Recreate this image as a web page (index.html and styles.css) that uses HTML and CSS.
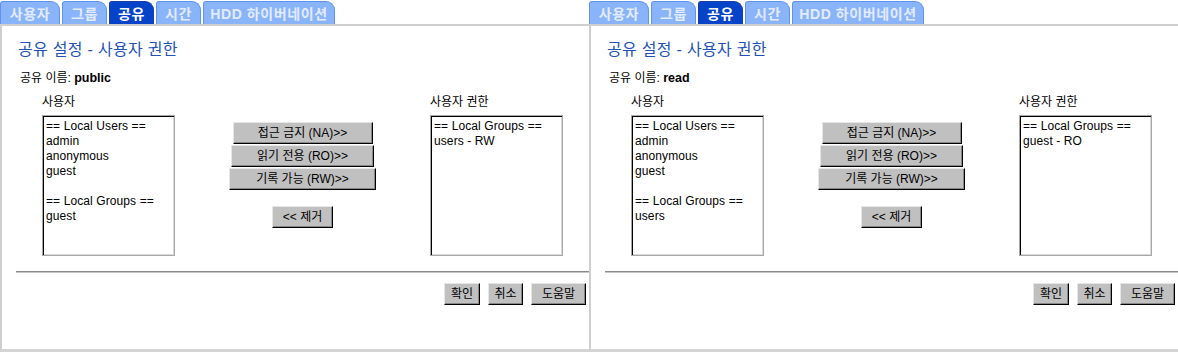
FILE: index.html
```html
<!DOCTYPE html>
<html lang="ko">
<head>
<meta charset="utf-8">
<link rel="stylesheet" href="styles.css">
</head>
<body>
<div class="page">
  <section class="panel">
    <nav class="tabs">
      <span class="tab t1">사용자</span>
      <span class="tab t2">그룹</span>
      <span class="tab t3 active">공유</span>
      <span class="tab t4">시간</span>
      <span class="tab t5">HDD 하이버네이션</span>
    </nav>
    <div class="body">
      <h1 class="title">공유 설정 - 사용자 권한</h1>
      <p class="share">공유 이름: <b>public</b></p>
      <div class="perm">
        <div class="col">
          <div class="label">사용자</div>
          <div class="list">
            <div>== Local Users ==</div>
            <div>admin</div>
            <div>anonymous</div>
            <div>guest</div>
            <div>&nbsp;</div>
            <div>== Local Groups ==</div>
            <div>guest</div>
          </div>
        </div>
        <div class="actions">
          <button class="btn b-na">접근 금지 (NA)&gt;&gt;</button>
          <button class="btn b-ro">읽기 전용 (RO)&gt;&gt;</button>
          <button class="btn b-rw">기록 가능 (RW)&gt;&gt;</button>
          <button class="btn b-rm">&lt;&lt; 제거</button>
        </div>
        <div class="col">
          <div class="label">사용자 권한</div>
          <div class="list">
            <div>== Local Groups ==</div>
            <div>users - RW</div>
          </div>
        </div>
      </div>
      <div class="divider"></div>
      <div class="footer">
        <button class="btn f-ok">확인</button>
        <button class="btn f-cancel">취소</button>
        <button class="btn f-help">도움말</button>
      </div>
    </div>
  </section>
  <section class="panel">
    <nav class="tabs">
      <span class="tab t1">사용자</span>
      <span class="tab t2">그룹</span>
      <span class="tab t3 active">공유</span>
      <span class="tab t4">시간</span>
      <span class="tab t5">HDD 하이버네이션</span>
    </nav>
    <div class="body">
      <h1 class="title">공유 설정 - 사용자 권한</h1>
      <p class="share">공유 이름: <b>read</b></p>
      <div class="perm">
        <div class="col">
          <div class="label">사용자</div>
          <div class="list">
            <div>== Local Users ==</div>
            <div>admin</div>
            <div>anonymous</div>
            <div>guest</div>
            <div>&nbsp;</div>
            <div>== Local Groups ==</div>
            <div>users</div>
          </div>
        </div>
        <div class="actions">
          <button class="btn b-na">접근 금지 (NA)&gt;&gt;</button>
          <button class="btn b-ro">읽기 전용 (RO)&gt;&gt;</button>
          <button class="btn b-rw">기록 가능 (RW)&gt;&gt;</button>
          <button class="btn b-rm">&lt;&lt; 제거</button>
        </div>
        <div class="col">
          <div class="label">사용자 권한</div>
          <div class="list">
            <div>== Local Groups ==</div>
            <div>guest - RO</div>
          </div>
        </div>
      </div>
      <div class="divider"></div>
      <div class="footer">
        <button class="btn f-ok">확인</button>
        <button class="btn f-cancel">취소</button>
        <button class="btn f-help">도움말</button>
      </div>
    </div>
  </section>
</div>
</body>
</html>
```

FILE: styles.css
```css
* { box-sizing: border-box; }
html, body { margin: 0; padding: 0; background: #fff; }
body {
  font-family: "Liberation Sans", "Noto Sans CJK KR", sans-serif;
  font-size: 12px;
  color: #000;
}
.page {
  display: flex;
  width: 1178px;
  height: 352px;
  overflow: hidden;
}
.panel {
  width: 589px;
  height: 352px;
  display: flex;
  flex-direction: column;
}
.tabs {
  display: flex;
  height: 24px;
  align-items: flex-end;
  gap: 2px;
}
.tab {
  height: 23px;
  display: flex;
  align-items: center;
  justify-content: center;
  background: #8ab4fa;
  border: 1px solid #5f93ee;
  border-bottom: none;
  border-radius: 3px 9px 0 0;
  color: #e2ebff;
  font-family: "Liberation Sans", "Noto Sans CJK KR", sans-serif;
  font-weight: bold;
  font-size: 14px;
  letter-spacing: 0.6px;
}
.tab.active {
  background: #0544c8;
  border-color: #1a3fa0;
  color: #fff;
}
.t1 { width: 60px; }
.t2 { width: 45px; }
.t3 { width: 45px; }
.t4 { width: 45px; }
.t5 { width: 132px; }
.body {
  flex: 1;
  border-top: 2px solid #cfcfcf;
  border-left: 2px solid #cfcfcf;
  border-bottom: 3px solid #d4d4d4;
  display: flex;
  flex-direction: column;
}
.title {
  margin: 14px 0 0 16px;
  font-size: 16px;
  line-height: 20px;
  font-weight: normal;
  color: #2352b6;
  letter-spacing: 0.3px;
}
.share {
  margin: 10px 0 0 18px;
  line-height: 16px;
  font-size: 12px;
}
.share b { font-size: 12.5px; }
.perm {
  display: grid;
  grid-template-columns: 133px 1fr 133px;
  margin: 8px 26px 0 40px;
}
.label {
  line-height: 16px;
  height: 21px;
}
.list {
  height: 141px;
  border: 1px solid #a8a8a8;
  box-shadow: inset 1px 1px 0 #000, inset -1px -1px 0 #d8d8d8;
  padding: 3px 0 0 3px;
  line-height: 15px;
  font-size: 12px;
  letter-spacing: 0.1px;
  white-space: nowrap;
  overflow: hidden;
}
.actions {
  display: flex;
  flex-direction: column;
  align-items: center;
  padding-top: 28px;
  gap: 1px;
}
.btn {
  font-family: "Liberation Sans", "Noto Sans CJK KR", sans-serif;
  font-size: 12px;
  height: 22px;
  padding: 0;
  margin: 0;
  background: #c0c0c0;
  border: 1px solid;
  border-color: #e6e6e6 #000 #000 #e6e6e6;
  box-shadow: inset -1px -1px 0 #888;
  color: #000;
  line-height: 18px;
}
.b-na { width: 140px; }
.b-ro { width: 143px; }
.b-rw { width: 147px; }
.b-rm { width: 61px; margin-top: 15px; }
.divider {
  margin: 15px 0 0 14px;
  height: 2px;
  border-top: 1px solid #8a8a8a;
  border-bottom: 1px solid #c8c8c8;
}
.footer {
  display: flex;
  justify-content: flex-end;
  gap: 8px;
  margin: 10px 3px 0 0;
}
.f-ok { width: 36px; }
.f-cancel { width: 35px; }
.f-help { width: 55px; }
```
